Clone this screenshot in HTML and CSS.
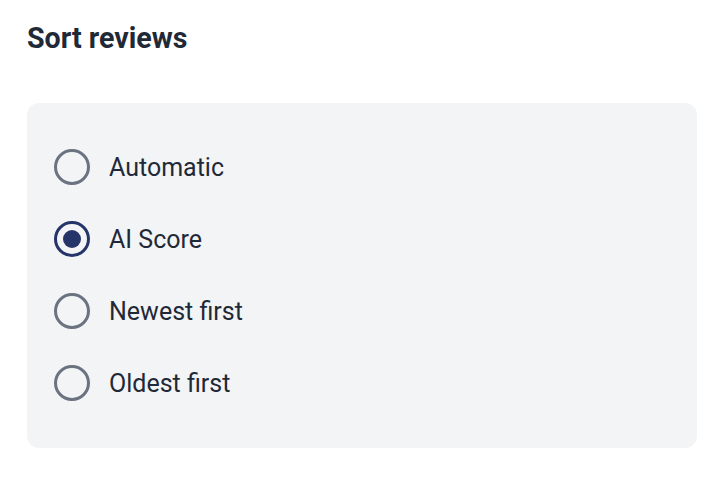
FILE: index.html
```html
<!DOCTYPE html>
<html>
<head>
<meta charset="utf-8">
<link rel="stylesheet" href="styles.css">
</head>
<body>
<div class="page">
  <h1 class="title">Sort reviews</h1>
  <div class="card">
    <label class="option"><span class="radio"></span><span class="label">Automatic</span></label>
    <label class="option"><span class="radio checked"></span><span class="label">AI Score</span></label>
    <label class="option"><span class="radio"></span><span class="label">Newest first</span></label>
    <label class="option"><span class="radio"></span><span class="label">Oldest first</span></label>
  </div>
</div>
</body>
</html>
```
FILE: styles.css
```css
html, body {
  margin: 0;
  padding: 0;
  background: #ffffff;
}
body {
  font-family: Roboto, "Noto Sans", sans-serif;
  color: #1f2937;
}
.page {
  padding: 20px 31px 0 27px;
}
.title {
  margin: 0;
  font-size: 28.6px;
  font-weight: 700;
  line-height: 36px;
  color: #1f2937;
}
.card {
  margin-top: 47px;
  background: #f3f4f6;
  border-radius: 12px;
  padding: 46px 27px 29px;
  display: flex;
  flex-direction: column;
  gap: 36px;
  height: 345px;
  box-sizing: border-box;
}
.option {
  display: flex;
  align-items: center;
  gap: 19px;
  height: 36px;
}
.radio {
  width: 36px;
  height: 36px;
  box-sizing: border-box;
  border: 3px solid #6b7280;
  border-radius: 50%;
  display: flex;
  align-items: center;
  justify-content: center;
  flex: none;
}
.radio.checked {
  border-color: #253569;
}
.radio.checked::after {
  content: "";
  width: 18px;
  height: 18px;
  border-radius: 50%;
  background: #253569;
}
.label {
  font-size: 25px;
  line-height: 36px;
  margin-top: 2px;
}
```
